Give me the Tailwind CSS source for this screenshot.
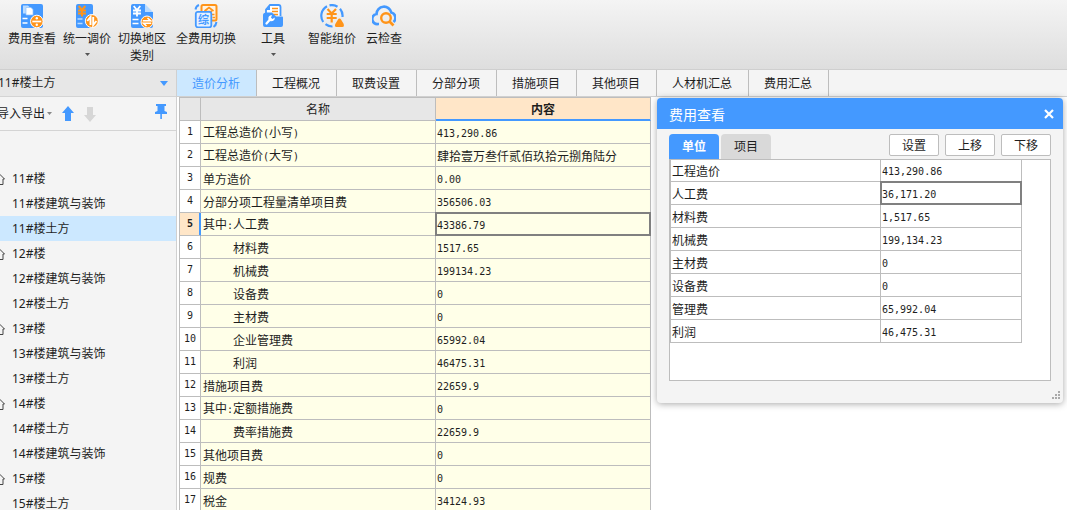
<!DOCTYPE html>
<html lang="zh-CN">
<head>
<meta charset="utf-8">
<title>造价分析</title>
<script src="https://cdn.jsdelivr.net/npm/@tailwindcss/browser@4"></script>
</head>
<body class="relative flex h-screen flex-col overflow-hidden bg-white font-['Noto_Sans','Noto_Sans_CJK_SC',sans-serif] text-xs text-[#1e1e1e]">

<header class="flex h-[70px] shrink-0 items-start border-b border-[#cfcfcf] bg-linear-to-b from-[#f4f4f4] to-[#dedede] pt-1 pl-2">
  <button class="flex w-12 flex-col items-center">
    <svg class="size-6" viewBox="0 0 24 24" fill="none"><rect x="1" width="22" height="24" rx="2" fill="#4499ff"/><path d="M3 1.500h5l2 2v6H3z" fill="#b9dbff"/><path d="M6 3.500h5l2 2v5.500H6z" fill="#fff" stroke="#8cc2ff" stroke-width=".7"/><path d="M2.500 14.500h5M2.500 19h5" stroke="#fff" stroke-width="1.500"/><circle cx="16.800" cy="17.500" r="6.300" fill="#ff9419" stroke="#fff"/><path d="M12.300 17.500h9" stroke="#fff" stroke-width="1.700"/><circle cx="16.800" cy="14.300" r="1.200" fill="#fff"/><circle cx="16.800" cy="20.700" r="1.200" fill="#fff"/></svg>
    <span class="mt-0.5 leading-[17px]">费用查看</span>
  </button>
  <button class="ml-[7px] flex w-12 flex-col items-center">
    <svg class="size-6" viewBox="0 0 24 24" fill="none"><rect x="1" width="17" height="24" rx="2" fill="#4499ff"/><path d="M3.700 2l3.300 4 3.300-4M7 6v6.500M3 6.500h8M3 9.500h8" stroke="#ff9419" stroke-width="2"/><path d="M2.500 15h5M2.500 19.500h5" stroke="#b9dbff" stroke-width="1.500"/><circle cx="16.800" cy="17" r="6.500" fill="#ff9419" stroke="#fff"/><path d="M15.500 21v-8l-3.200 4M18.200 13v8l3.200-4" stroke="#fff" stroke-width="1.900"/></svg>
    <span class="mt-0.5 leading-[17px]">统一调价</span>
    <svg class="mt-1.5 h-[3px] w-[5px]" viewBox="0 0 5 3"><path d="M0 0h5L2.500 3z" fill="#555"/></svg>
  </button>
  <button class="ml-[7px] flex w-12 flex-col items-center">
    <svg class="size-6" viewBox="0 0 24 24" fill="none"><path d="M3 0h12v8h8v14a2 2 0 0 1-2 2H3a2 2 0 0 1-2-2V2a2 2 0 0 1 2-2z" fill="#4499ff"/><path d="M15 0l8 8h-8z" fill="#b9dbff"/><path d="M3.700 2l3.300 4 3.300-4M7 6v6.500M3 6.500h8M3 9.500h8" stroke="#fff" stroke-width="1.800"/><path d="M2.500 15.500h6M2.500 19.500h6" stroke="#fff" stroke-width="1.500"/><circle cx="17" cy="18" r="6" fill="#ff9419" stroke="#fff"/><path d="M12.800 16.700h7.700L17.500 14M21.200 19.300h-7.700l3 2.700" stroke="#fff" stroke-width="1.600"/></svg>
    <span class="mt-0.5 leading-[17px]">切换地区<br>类别</span>
  </button>
  <button class="ml-[10px] flex w-[60px] flex-col items-center">
    <svg class="size-6" viewBox="0 0 24 24" fill="none"><rect x="7.500" y="1" width="15" height="15.500" rx="1.500" fill="#fff3e2" stroke="#ff9419" stroke-width="2"/><path d="M10.500 7L15 3.500 19.500 7M12 7.500h6M18 10.500h2.500M18.500 13.500h2.500" stroke="#ff9419" stroke-width="1.700"/><rect x="1.800" y="7.800" width="15.500" height="15.500" rx="2" fill="#e6f2ff" stroke="#4499ff" stroke-width="1.800"/><text x="9.600" y="19.500" font-size="11" font-weight="700" text-anchor="middle" fill="#4499ff">综</text><path d="M1.500 5.500Q2 2 5 1M22.500 18Q22 21.500 19.500 23" stroke="#4499ff" stroke-width="2"/></svg>
    <span class="mt-0.5 leading-[17px]">全费用切换</span>
  </button>
  <button class="ml-[25px] flex w-6 flex-col items-center">
    <svg class="size-6" viewBox="0 0 24 24" fill="none"><path d="M5 9V5.500L9 1h8.500a2 2 0 0 1 2 2v9" fill="#fff" stroke="#4499ff" stroke-width="1.800"/><path d="M9 1.500V6H5z" fill="#4499ff"/><path d="M11 4.500h6M11 7.500h6M12 10.500h5" stroke="#ff9419" stroke-width="1.600"/><path d="M2 11q0-2.500 3.500-2.500H11l4 4h6a1 1 0 0 1 1 1V21a2 2 0 0 1-2 2H4a2 2 0 0 1-2-2z" fill="#4499ff"/><path d="M5.500 19.500l3.500-4" stroke="#fff" stroke-width="2.300" stroke-linecap="round"/><path d="M7.500 15.500q-1-4 3.500-4.500l-1 2.800 1.500 1.200 2.300-1.500q0 4-4.300 3.700z" fill="#fff"/></svg>
    <span class="mt-0.5 leading-[17px]">工具</span>
    <svg class="mt-1.5 h-[3px] w-[5px]" viewBox="0 0 5 3"><path d="M0 0h5L2.500 3z" fill="#555"/></svg>
  </button>
  <button class="ml-[23px] flex w-12 flex-col items-center">
    <svg class="size-6" viewBox="0 0 24 24" fill="none"><path d="M7 2.200A11 11 0 0 0 3.200 18M5.500 20.200A11 11 0 0 0 12.500 22.500M9.500 1.300A11 11 0 0 1 17.500 2.700M20 4.700A11 11 0 0 1 22.500 13" stroke="#4499ff" stroke-width="2.200"/><path d="M7.500 5l4.200 4.500L16 5M11.700 9v9.500M6.700 10h10M6.700 14h10" stroke="#ff9419" stroke-width="2.200"/><path d="M19.500 14.500q1 0 1.500 1l2.600 4.200q1 3.300-1.300 3.300h-5.800q-2.300 0-1.200-3l2.700-4.500q.5-1 1.500-1z" fill="#ff9419"/></svg>
    <span class="mt-0.5 leading-[17px]">智能组价</span>
  </button>
  <button class="ml-[10px] flex w-9 flex-col items-center">
    <svg class="size-6" viewBox="0 0 24 24" fill="none"><path d="M7 20H6A5 5 0 0 1 4.500 10 7.500 7.500 0 0 1 19.300 8.500 5.500 5.500 0 0 1 21.500 18" stroke="#4499ff" stroke-width="2.700"/><circle cx="14" cy="14" r="4.800" stroke="#ff9419" stroke-width="2.400"/><path d="M17.500 17.500l4 4" stroke="#ff9419" stroke-width="2.600"/></svg>
    <span class="mt-0.5 leading-[17px]">云检查</span>
  </button>
</header>

<div class="flex min-h-0 flex-1">
  <aside class="flex w-[177px] shrink-0 flex-col overflow-hidden border-r border-[#d0d0d0] bg-[#f4f4f4]">
    <button class="flex h-[27px] shrink-0 items-center justify-between border-b border-[#d4d4d4] bg-[#e7e7e7] pr-2">
      <span class="-ml-0.5">11#楼土方</span>
      <svg class="h-[5px] w-2" viewBox="0 0 8 5"><path d="M0 0h8L4 5z" fill="#4499ff"/></svg>
    </button>
    <div class="flex h-[34px] shrink-0 items-center border-b border-[#d4d4d4] pr-[9px]">
      <button class="-ml-[3px] flex items-center gap-0.5 whitespace-nowrap">导入导出<svg class="h-[3px] w-[5px]" viewBox="0 0 5 3"><path d="M0 0h5L2.500 3z" fill="#888"/></svg></button>
      <button class="ml-[10px]" aria-label="上移"><svg class="h-4 w-3" viewBox="0 0 12 16"><path d="M6 0l6 7H9v8H3V7H0z" fill="#4499ff"/></svg></button>
      <button class="ml-[10px]" aria-label="下移"><svg class="h-4 w-3" viewBox="0 0 12 16"><path d="M6 16l6-7H9V1H3v8H0z" fill="#d6d6d6"/></svg></button>
      <button class="ml-auto pb-1" aria-label="固定"><svg class="h-[15px] w-3" viewBox="0 0 12 15"><path d="M1 0h10v2H9.500v5L12 8v2H0V8l2.500-1V2H1z" fill="#4499ff"/><path d="M5.300 10h1.600v5H5.300z" fill="#4499ff"/></svg></button>
    </div>
    <ul class="pt-[35px] [&_a]:flex [&_a]:h-[25px] [&_a]:items-center [&_a]:pl-3 [&_svg]:-ml-[17px] [&_svg]:mr-[7px] [&_svg]:h-3 [&_svg]:w-[10px]">
      <li><a href="#"><svg viewBox="0 0 10 12"><path d="M.500 6L5 1.500 9.500 6H8v5.500H2V6z" fill="none" stroke="#444"/></svg>11#楼</a></li>
      <li><a href="#">11#楼建筑与装饰</a></li>
      <li><a href="#" class="bg-[#cce8ff]">11#楼土方</a></li>
      <li><a href="#"><svg viewBox="0 0 10 12"><path d="M.500 6L5 1.500 9.500 6H8v5.500H2V6z" fill="none" stroke="#444"/></svg>12#楼</a></li>
      <li><a href="#">12#楼建筑与装饰</a></li>
      <li><a href="#">12#楼土方</a></li>
      <li><a href="#"><svg viewBox="0 0 10 12"><path d="M.500 6L5 1.500 9.500 6H8v5.500H2V6z" fill="none" stroke="#444"/></svg>13#楼</a></li>
      <li><a href="#">13#楼建筑与装饰</a></li>
      <li><a href="#">13#楼土方</a></li>
      <li><a href="#"><svg viewBox="0 0 10 12"><path d="M.500 6L5 1.500 9.500 6H8v5.500H2V6z" fill="none" stroke="#444"/></svg>14#楼</a></li>
      <li><a href="#">14#楼土方</a></li>
      <li><a href="#">14#楼建筑与装饰</a></li>
      <li><a href="#"><svg viewBox="0 0 10 12"><path d="M.500 6L5 1.500 9.500 6H8v5.500H2V6z" fill="none" stroke="#444"/></svg>15#楼</a></li>
      <li><a href="#">15#楼土方</a></li>
    </ul>
  </aside>

  <main class="flex min-w-0 flex-1 flex-col">
    <nav class="flex h-[27px] shrink-0 border-b border-[#d0d0d0] bg-[#f4f4f4] [&>button]:min-w-20 [&>button]:border-r [&>button]:border-[#bdbdbd] [&>button]:pt-0.5 [&>button]:pr-4 [&>button]:pl-[15px] [&>button]:text-left">
      <button class="bg-[#cce8ff] text-[#4499ff]">造价分析</button>
      <button>工程概况</button>
      <button>取费设置</button>
      <button>分部分项</button>
      <button>措施项目</button>
      <button>其他项目</button>
      <button>人材机汇总</button>
      <button>费用汇总</button>
    </nav>
    <div class="min-h-0 flex-1 overflow-hidden pl-0.5">
      <table class="w-[472px] table-fixed border-separate border-spacing-0 border-t border-l border-[#bdbdbd] font-['Noto_Sans_CJK_SC',sans-serif] leading-4 [&_i]:font-['DejaVu_Sans_Mono',monospace] [&_i]:text-[10px] [&_i]:not-italic [&_tbody_th]:font-['DejaVu_Sans_Mono',monospace] [&_tbody_th]:text-[10px] [&_td]:h-[23px] [&_td]:border-r [&_td]:border-b [&_td]:border-[#bdbdbd] [&_td]:bg-[#ffffe8] [&_td]:pt-0.5 [&_td]:pl-0.5 [&_td:last-child]:pl-px [&_th]:h-[23px] [&_th]:border-r [&_th]:border-b [&_th]:border-[#bdbdbd]">
        <colgroup><col class="w-[21px]"><col class="w-[235px]"><col class="w-[215px]"></colgroup>
        <thead>
          <tr class="bg-[#e7e7e7]"><th></th><th class="font-normal">名称</th><th class="border-b-[#4499ff]! bg-[#ffe6c8] font-bold shadow-[inset_0_-1px_0_#4499ff]">内容</th></tr>
        </thead>
        <tbody class="[&_th]:font-normal">
          <tr><th>1</th><td>工程总造价<i>(</i>小写<i>)</i></td><td><i>413,290.86</i></td></tr>
          <tr><th>2</th><td>工程总造价<i>(</i>大写<i>)</i></td><td>肆拾壹万叁仟贰佰玖拾元捌角陆分</td></tr>
          <tr><th>3</th><td>单方造价</td><td><i>0.00</i></td></tr>
          <tr><th>4</th><td>分部分项工程量清单项目费</td><td><i>356506.03</i></td></tr>
          <tr><th class="border-r-[#4499ff]! bg-[#ffe6c8] font-bold! shadow-[inset_-1px_0_0_#4499ff]">5</th><td>其中<i>:</i>人工费</td><td class="border-[#808080]! shadow-[inset_0_0_0_1px_#808080,-1px_0_0_#808080,0_-1px_0_#808080,-1px_-1px_0_#808080]"><i>43386.79</i></td></tr>
          <tr><th>6</th><td class="pl-8!">材料费</td><td><i>1517.65</i></td></tr>
          <tr><th>7</th><td class="pl-8!">机械费</td><td><i>199134.23</i></td></tr>
          <tr><th>8</th><td class="pl-8!">设备费</td><td><i>0</i></td></tr>
          <tr><th>9</th><td class="pl-8!">主材费</td><td><i>0</i></td></tr>
          <tr><th>10</th><td class="pl-8!">企业管理费</td><td><i>65992.04</i></td></tr>
          <tr><th>11</th><td class="pl-8!">利润</td><td><i>46475.31</i></td></tr>
          <tr><th>12</th><td>措施项目费</td><td><i>22659.9</i></td></tr>
          <tr><th>13</th><td>其中<i>:</i>定额措施费</td><td><i>0</i></td></tr>
          <tr><th>14</th><td class="pl-8!">费率措施费</td><td><i>22659.9</i></td></tr>
          <tr><th>15</th><td>其他项目费</td><td><i>0</i></td></tr>
          <tr><th>16</th><td>规费</td><td><i>0</i></td></tr>
          <tr><th>17</th><td>税金</td><td><i>34124.93</i></td></tr>
        </tbody>
      </table>
    </div>
  </main>
</div>

<!-- Floating tool window -->
<section class="absolute top-[98px] right-1 w-[406px] rounded-sm bg-[#f4f4f4] shadow-[0_1px_7px_rgba(0,0,0,0.35)]">
  <div class="flex h-[31px] items-center justify-between rounded-t-sm bg-[#4499ff] pr-[9px] pl-3 text-white">
    <h2 class="pt-0.5 text-sm">费用查看</h2>
    <button aria-label="关闭"><svg class="size-[10px]" viewBox="0 0 10 10"><path d="M1 1l8 8M9 1L1 9" stroke="#fff" stroke-width="2.200"/></svg></button>
  </div>
  <div class="px-3 pt-[5px]">
    <div class="flex items-start">
      <button class="h-[25px] w-[50px] rounded-t-sm bg-[#4499ff] font-bold text-white">单位</button>
      <button class="ml-0.5 h-[25px] w-[50px] rounded-t-sm bg-[#d9d9d9]">项目</button>
      <div class="ml-auto flex gap-1.5 [&>button]:h-[22px] [&>button]:w-[50px] [&>button]:rounded-xs [&>button]:border [&>button]:border-[#bdbdbd] [&>button]:bg-white [&>button]:pt-px">
        <button>设置</button>
        <button>上移</button>
        <button>下移</button>
      </div>
    </div>
    <div class="h-[222px] border border-[#bdbdbd] bg-white">
      <table class="w-[352px] table-fixed border-separate border-spacing-0 border-l border-[#bdbdbd] font-['Noto_Sans_CJK_SC',sans-serif] leading-4 [&_i]:font-['DejaVu_Sans_Mono',monospace] [&_i]:text-[10px] [&_i]:not-italic [&_td]:h-[23px] [&_td]:border-r [&_td]:border-b [&_td]:border-[#bdbdbd] [&_td]:pt-0.5 [&_td]:pl-px [&_tr:first-child_td]:h-[22px] [&_tr:first-child_td]:pt-px">
        <colgroup><col class="w-[210px]"><col class="w-[141px]"></colgroup>
        <tbody>
          <tr><td>工程造价</td><td><i>413,290.86</i></td></tr>
          <tr><td>人工费</td><td class="border-[#808080]! shadow-[inset_0_0_0_1px_#808080,-1px_0_0_#808080,0_-1px_0_#808080,-1px_-1px_0_#808080]"><i>36,171.20</i></td></tr>
          <tr><td>材料费</td><td><i>1,517.65</i></td></tr>
          <tr><td>机械费</td><td><i>199,134.23</i></td></tr>
          <tr><td>主材费</td><td><i>0</i></td></tr>
          <tr><td>设备费</td><td><i>0</i></td></tr>
          <tr><td>管理费</td><td><i>65,992.04</i></td></tr>
          <tr><td>利润</td><td><i>46,475.31</i></td></tr>
        </tbody>
      </table>
    </div>
  </div>
  <div class="flex h-[22px] items-end justify-end pr-[3px] pb-1">
    <svg class="size-2" viewBox="0 0 8 8" fill="#aaa"><path d="M6 0h2v2H6zM6 3h2v2H6zM3 3h2v2H3zM6 6h2v2H6zM3 6h2v2H3zM0 6h2v2H0z"/></svg>
  </div>
</section>
</body>
</html>
